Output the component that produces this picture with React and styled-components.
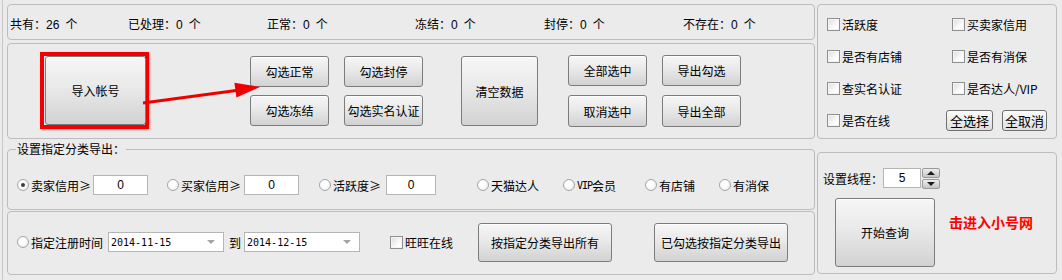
import React from "react";
import styled, { createGlobalStyle, css } from "styled-components";

const GlobalStyle = createGlobalStyle`
	html, body {
		margin: 0;
		padding: 0;
		background: #ebebeb;
	}
	body {
		font-family: "Noto Sans CJK SC", "Liberation Sans", sans-serif;
		font-size: 12px;
		color: #000;
	}
`;

const stats = [
	["共有", "26"],
	["已处理", "0"],
	["正常", "0"],
	["冻结", "0"],
	["封停", "0"],
	["不存在", "0"]
];

const options = [
	"活跃度",
	"买卖家信用",
	"是否有店铺",
	"是否有消保",
	"查实名认证",
	"是否达人/VIP"
];

const App = () => (
	<>
		<GlobalStyle />
		<Window>
			<LeftColumn>
				<StatsBar>
					{stats.map(([label, n]) => (
						<Stat key={label}>
							{label}：<Count>{n}</Count>个
						</Stat>
					))}
				</StatsBar>

				<ActionPanel>
					<ImportFrame>
						<Button $w={101} $h={69}>导入帐号</Button>
					</ImportFrame>
					<ButtonStack $ml={101} $gap={8}>
						<Button $w={79} $h={31}>勾选正常</Button>
						<Button $w={79} $h={31}>勾选冻结</Button>
					</ButtonStack>
					<ButtonStack $ml={15} $gap={8}>
						<Button $w={79} $h={31}>勾选封停</Button>
						<Button $w={79} $h={31}>勾选实名认证</Button>
					</ButtonStack>
					<Button $w={77} $h={70} $ml={38}>清空数据</Button>
					<ButtonStack $ml={30} $gap={9}>
						<Button $w={79} $h={31}>全部选中</Button>
						<Button $w={79} $h={32}>取消选中</Button>
					</ButtonStack>
					<ButtonStack $ml={15} $gap={9}>
						<Button $w={79} $h={31}>导出勾选</Button>
						<Button $w={79} $h={32}>导出全部</Button>
					</ButtonStack>
					<Arrow viewBox="0 0 806 94">
						<line x1="135" y1="59" x2="230" y2="46.2" stroke="#ee0000" strokeWidth="3" />
						<polygon points="252,43 228.4,53.6 226.4,38.8" fill="#ee0000" />
					</Arrow>
				</ActionPanel>

				<FilterGroup>
					<Legend>设置指定分类导出：</Legend>
					<FilterRow>
						<Item>
							<Radio $checked />
							卖家信用≥
							<NumberBox $w={55} $ml={2} readOnly value="0" />
						</Item>
						<Item>
							<Radio />
							买家信用≥
							<NumberBox $w={55} $ml={3} readOnly value="0" />
						</Item>
						<Item>
							<Radio />
							活跃度≥
							<NumberBox $w={50} $ml={5} readOnly value="0" />
						</Item>
						<Item>
							<Radio />
							天猫达人
						</Item>
						<Item>
							<Radio />
							<Small>VIP</Small>会员
						</Item>
						<Item>
							<Radio />
							有店铺
						</Item>
						<Item>
							<Radio />
							有消保
						</Item>
					</FilterRow>
				</FilterGroup>

				<DatePanel>
					<Item>
						<Radio />
						指定注册时间
					</Item>
					<Combo $ml={5}>
						2014-11-15
						<Caret />
					</Combo>
					<Item $ml={5}>到</Item>
					<Combo $ml={3}>
						2014-12-15
						<Caret />
					</Combo>
					<Item $ml={30}>
						<Check />
						旺旺在线
					</Item>
					<Button $w={134} $h={39} $ml={25}>按指定分类导出所有</Button>
					<Button $w={134} $h={39} $ml={42}>已勾选按指定分类导出</Button>
				</DatePanel>
			</LeftColumn>

			<RightColumn>
				<OptionPanel>
					{options.map((o) => (
						<Item key={o}>
							<Check />
							{o}
						</Item>
					))}
					<Item>
						<Check />
						是否在线
					</Item>
					<SmallButtons>
						<SmallButton $w={47}>全选择</SmallButton>
						<SmallButton $w={45}>全取消</SmallButton>
					</SmallButtons>
				</OptionPanel>

				<ThreadPanel>
					<ThreadRow>
						设置线程：
						<NumberBox $w={38} $ml={0} readOnly value="5" />
						<Spinner>
							<SpinButton>
								<Tri $up />
							</SpinButton>
							<SpinButton>
								<Tri />
							</SpinButton>
						</Spinner>
					</ThreadRow>
					<StartRow>
						<Button $w={100} $h={69} $ml={12}>开始查询</Button>
						<RedLink>击进入小号网</RedLink>
					</StartRow>
				</ThreadPanel>
			</RightColumn>
		</Window>
	</>
);

const panel = css`
	box-sizing: border-box;
	border: 1px solid #bdbdbd;
	border-radius: 4px;
`;

const Window = styled.div`
	display: flex;
	gap: 2px;
	width: 1060px;
	height: 280px;
	box-sizing: border-box;
	margin-left: 2px;
	padding: 4px 0 0 4px;
	border-left: 1px solid #c8c8c8;
`;

const LeftColumn = styled.div`
	display: flex;
	flex-direction: column;
	width: 808px;
`;

const RightColumn = styled.div`
	display: flex;
	flex-direction: column;
	width: 240px;
`;

const StatsBar = styled.div`
	${panel};
	height: 36px;
	display: grid;
	grid-template-columns: 118px 139px 148px 129px 139px 1fr;
	align-items: center;
	padding: 2px 0 0 2px;
`;

const Stat = styled.span`
	white-space: nowrap;
`;

const Count = styled.span`
	margin-right: 6px;
	font-family: "Liberation Sans", sans-serif;
`;

const ActionPanel = styled.div`
	${panel};
	position: relative;
	height: 96px;
	margin-top: 3px;
	display: flex;
	align-items: center;
	padding-left: 32px;
`;

const ImportFrame = styled.div`
	box-sizing: border-box;
	width: 109px;
	height: 77px;
	border: 4px solid #f20000;
	padding: 0 0 0 1px;
	display: flex;
	align-items: center;
	margin-top: -2px;
	box-shadow: 1px 1px 2px rgba(120, 0, 0, 0.35);
`;

const ButtonStack = styled.div`
	display: flex;
	flex-direction: column;
	gap: ${(p) => p.$gap}px;
	margin-left: ${(p) => p.$ml}px;
`;

const Button = styled.button`
	box-sizing: border-box;
	flex: none;
	width: ${(p) => p.$w}px;
	height: ${(p) => p.$h}px;
	margin: 0 0 0 ${(p) => p.$ml || 0}px;
	padding: 0;
	font: inherit;
	color: #000;
	border: 1px solid #7c7c7c;
	border-radius: 3px;
	background: linear-gradient(#f6f6f6, #e9e9e9 45%, #d2d2d2);
	box-shadow: inset 0 1px 0 #ffffff;
	white-space: nowrap;
`;

const Arrow = styled.svg`
	position: absolute;
	left: 0;
	top: 0;
	width: 806px;
	height: 94px;
	overflow: visible;
	pointer-events: none;
`;

const FilterGroup = styled.fieldset`
	${panel};
	margin: 2px 0 0;
	height: 69px;
	padding: 0 0 0 8px;
	min-width: 0;
`;

const Legend = styled.legend`
	padding: 0 1px;
	margin-left: 0;
	line-height: 16px;
	font-size: 12px;
`;

const FilterRow = styled.div`
	display: grid;
	grid-template-columns: 150px 152px 158px 86px 82px 74px auto;
	align-items: center;
	height: 20px;
	margin-top: 18px;
	padding-left: 1px;
`;

const Item = styled.label`
	display: inline-flex;
	align-items: center;
	white-space: nowrap;
	margin-left: ${(p) => p.$ml || 0}px;
`;

const Small = styled.span`
	font-family: "DejaVu Sans Mono", monospace;
	font-size: 10px;
	letter-spacing: -1px;
`;

const Radio = styled.span`
	box-sizing: border-box;
	width: 12px;
	height: 12px;
	margin-right: 2px;
	border-radius: 50%;
	border: 1px solid #a6a6a6;
	background: radial-gradient(circle at 40% 40%, #ffffff 30%, #e2e2e2 100%);
	display: inline-flex;
	align-items: center;
	justify-content: center;
	&::after {
		content: "";
		display: ${(p) => (p.$checked ? "block" : "none")};
		width: 4px;
		height: 4px;
		border-radius: 50%;
		background: #3c3c3c;
	}
`;

const Check = styled.span`
	box-sizing: border-box;
	width: 13px;
	height: 13px;
	margin-right: 2px;
	border: 1px solid #8e8f8f;
	background: linear-gradient(135deg, #dcdcdc, #ffffff 70%);
	box-shadow: inset 0 0 0 1px #f4f4f4;
`;

const NumberBox = styled.input`
	box-sizing: border-box;
	width: ${(p) => p.$w}px;
	height: 20px;
	margin: 0 0 0 ${(p) => p.$ml}px;
	padding: 0;
	border: 1px solid #b5b5b5;
	background: #fff;
	font-family: "Liberation Sans", sans-serif;
	font-size: 12px;
	text-align: center;
	outline: none;
`;

const DatePanel = styled.div`
	${panel};
	height: 64px;
	margin-top: 1px;
	display: flex;
	align-items: center;
	padding: 0 0 2px 9px;
`;

const Combo = styled.div`
	box-sizing: border-box;
	position: relative;
	width: 116px;
	height: 20px;
	margin-left: ${(p) => p.$ml}px;
	padding-left: 2px;
	border: 1px solid #b5b5b5;
	background: #fff;
	display: flex;
	align-items: center;
	font-family: "DejaVu Sans Mono", monospace;
	font-size: 10px;
`;

const Caret = styled.span`
	margin-left: auto;
	margin-right: 8px;
	width: 0;
	height: 0;
	border-left: 4px solid transparent;
	border-right: 4px solid transparent;
	border-top: 4px solid #a4a4a4;
`;

const OptionPanel = styled.div`
	${panel};
	height: 135px;
	display: grid;
	grid-template-columns: 125px 1fr;
	grid-auto-rows: 24px;
	row-gap: 8px;
	align-items: center;
	padding: 7px 0 0 9px;
`;

const SmallButtons = styled.div`
	display: flex;
	gap: 9px;
	margin-left: -6px;
`;

const SmallButton = styled.button`
	box-sizing: border-box;
	width: ${(p) => p.$w}px;
	height: 21px;
	margin: 0;
	padding: 0;
	font: inherit;
	font-size: 13px;
	color: #000;
	border: 1px solid #6f6f6f;
	border-radius: 3px;
	background: linear-gradient(#fbfbfb, #ececec 50%, #dedede);
`;

const ThreadPanel = styled.div`
	${panel};
	height: 122px;
	margin-top: 13px;
	padding: 15px 0 0 5px;
`;

const ThreadRow = styled.div`
	display: flex;
	align-items: center;
	height: 20px;
	white-space: nowrap;
`;

const Spinner = styled.div`
	display: flex;
	flex-direction: column;
	gap: 1px;
	margin-left: 1px;
`;

const SpinButton = styled.span`
	box-sizing: border-box;
	width: 18px;
	height: 10px;
	border: 1px solid #9a9a9a;
	border-radius: 2px;
	background: linear-gradient(#eeeeee, #c4c4c4);
	display: flex;
	align-items: center;
	justify-content: center;
`;

const Tri = styled.span`
	width: 0;
	height: 0;
	border-left: 4px solid transparent;
	border-right: 4px solid transparent;
	${(p) =>
		p.$up
			? css`border-bottom: 4px solid #1e1e1e;`
			: css`border-top: 4px solid #1e1e1e;`}
`;

const StartRow = styled.div`
	display: flex;
	align-items: flex-start;
	margin-top: 10px;
`;

const RedLink = styled.span`
	margin: 16px 0 0 14px;
	color: #ff0000;
	font-weight: bold;
	font-size: 14px;
	line-height: 16px;
	white-space: nowrap;
`;

export default App;
